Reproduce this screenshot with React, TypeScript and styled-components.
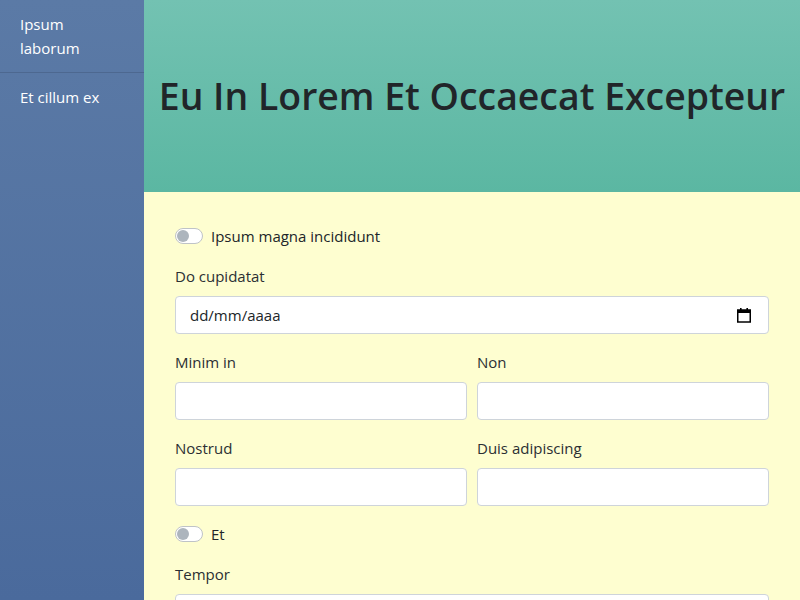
import React from 'react';
import styled, { createGlobalStyle } from 'styled-components';

const GlobalStyle = createGlobalStyle`
  * { box-sizing: border-box; }
  html, body { margin: 0; padding: 0; }
  body {
    font-family: "Open Sans", "Noto Sans", sans-serif;
    font-size: 15px;
    line-height: 24px;
    color: #212529;
  }
`;

const Layout = styled.div`
  display: flex;
  width: 800px;
  height: 600px;
  overflow: hidden;
`;

const Sidebar = styled.nav`
  width: 144px;
  flex-shrink: 0;
  background: linear-gradient(180deg, #5b7aa6 0%, #4a6a9c 100%);
  color: #fff;
`;

const NavItem = styled.div<{ $divider?: boolean }>`
  padding: 12px 20px;
  border-bottom: ${(p) => (p.$divider ? '1px solid #4d6890' : 'none')};
`;

const Main = styled.main`
  flex: 1;
  display: flex;
  flex-direction: column;
`;

const Header = styled.header`
  height: 192px;
  flex-shrink: 0;
  display: flex;
  align-items: center;
  justify-content: center;
  background: linear-gradient(180deg, #73c2b2 0%, #5bb7a2 100%);
`;

const Title = styled.h1`
  margin: 0;
  font-size: 37.4px;
  font-weight: 600;
  line-height: 1.2;
  white-space: nowrap;
  color: #212529;
`;

const Form = styled.form`
  flex: 1;
  background: #fefed0;
  padding: 32px 31px;
`;

const Group = styled.div`
  margin-bottom: 16px;
`;

const SwitchRow = styled.label`
  display: flex;
  align-items: center;
  gap: 8px;
  margin-bottom: 16px;
`;

const Switch = styled.span`
  width: 28px;
  height: 16px;
  border-radius: 8px;
  border: 1px solid #bfc3c7;
  background: #fff;
  display: flex;
  align-items: center;
  padding: 1px;
  &::after {
    content: '';
    width: 12px;
    height: 12px;
    border-radius: 50%;
    background: #adb5bd;
  }
`;

const Label = styled.div`
  margin-bottom: 8px;
  color: #2b2f33;
`;

const Field = styled.div`
  height: 38px;
  background: #fff;
  border: 1px solid #ced4da;
  border-radius: 4px;
  display: flex;
  align-items: center;
  padding: 0 17px 0 12px;
`;

const Input = styled.input`
  flex: 1;
  min-width: 0;
  border: none;
  outline: none;
  background: transparent;
  font: inherit;
  color: #212529;
  &::placeholder { color: #212529; }
`;

const Row = styled.div`
  display: grid;
  grid-template-columns: 1fr 1fr;
  gap: 10px;
`;

const CalendarIcon = () => (
  <svg width="14" height="16" viewBox="0 0 14 16">
    <rect x="0.75" y="3" width="12.5" height="12" fill="none" stroke="#000" strokeWidth="1.5" />
    <rect x="0.75" y="3" width="12.5" height="3" fill="#000" />
    <rect x="3" y="1" width="1.6" height="3" fill="#000" />
    <rect x="9.4" y="1" width="1.6" height="3" fill="#000" />
  </svg>
);

const TextField: React.FC<{ label: string }> = ({ label }) => (
  <Group>
    <Label>{label}</Label>
    <Field>
      <Input type="text" />
    </Field>
  </Group>
);

const App: React.FC = () => {
  return (
    <Layout>
      <GlobalStyle />
      <Sidebar>
        <NavItem $divider>Ipsum laborum</NavItem>
        <NavItem>Et cillum ex</NavItem>
      </Sidebar>
      <Main>
        <Header>
          <Title>Eu In Lorem Et Occaecat Excepteur</Title>
        </Header>
        <Form>
          <SwitchRow>
            <Switch />
            Ipsum magna incididunt
          </SwitchRow>

          <Group>
            <Label>Do cupidatat</Label>
            <Field>
              <Input type="text" placeholder="dd/mm/aaaa" />
              <CalendarIcon />
            </Field>
          </Group>

          <Row>
            <TextField label="Minim in" />
            <TextField label="Non" />
          </Row>

          <Row>
            <TextField label="Nostrud" />
            <TextField label="Duis adipiscing" />
          </Row>

          <SwitchRow>
            <Switch />
            Et
          </SwitchRow>

          <TextField label="Tempor" />
        </Form>
      </Main>
    </Layout>
  );
};

export default App;
